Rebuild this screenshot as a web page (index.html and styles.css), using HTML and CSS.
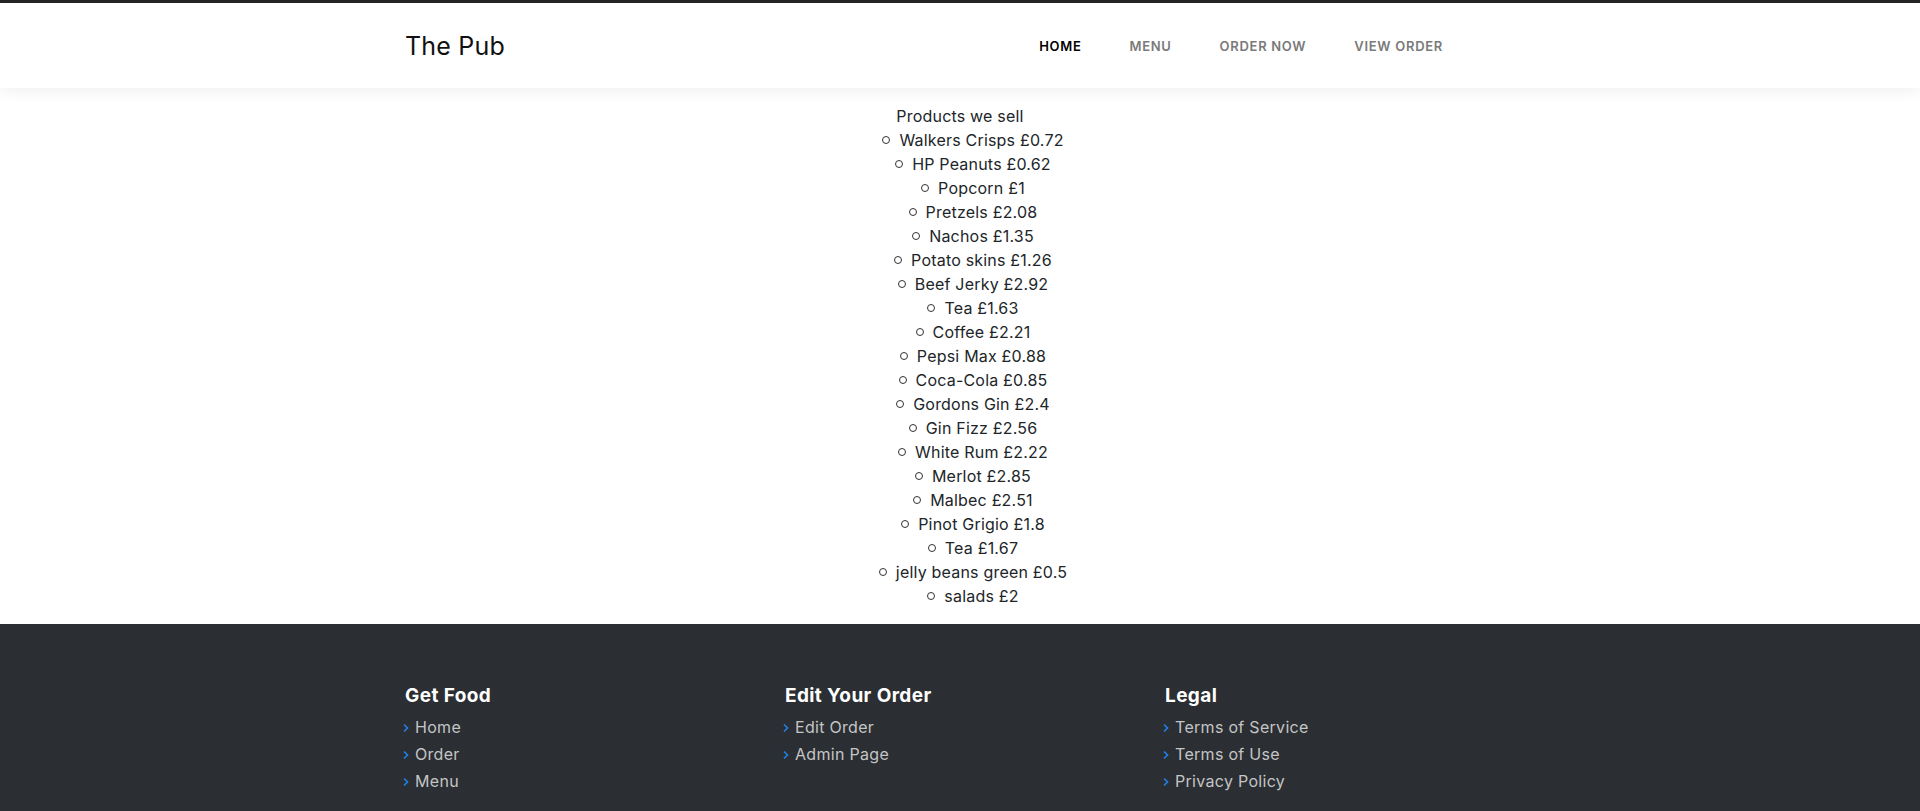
FILE: index.html
```html
<!DOCTYPE html>
<html lang="en">
<head>
<meta charset="utf-8">
<title>The Pub</title>
<link rel="stylesheet" href="styles.css">
</head>
<body>
<div class="topbar"></div>
<header class="site-header">
  <div class="container header-inner">
    <a class="logo" href="#">The Pub</a>
    <nav class="main-nav">
      <ul class="nav-list">
        <li><a class="nav-link active" href="#">HOME</a></li>
        <li><a class="nav-link" href="#">MENU</a></li>
        <li><a class="nav-link" href="#">ORDER NOW</a></li>
        <li><a class="nav-link" href="#">VIEW ORDER</a></li>
      </ul>
    </nav>
  </div>
</header>

<main class="products">
  <div class="products-title">Products we sell</div>
  <ul class="product-list">
    <li>Walkers Crisps £0.72</li>
    <li>HP Peanuts £0.62</li>
    <li>Popcorn £1</li>
    <li>Pretzels £2.08</li>
    <li>Nachos £1.35</li>
    <li>Potato skins £1.26</li>
    <li>Beef Jerky £2.92</li>
    <li>Tea £1.63</li>
    <li>Coffee £2.21</li>
    <li>Pepsi Max £0.88</li>
    <li>Coca-Cola £0.85</li>
    <li>Gordons Gin £2.4</li>
    <li>Gin Fizz £2.56</li>
    <li>White Rum £2.22</li>
    <li>Merlot £2.85</li>
    <li>Malbec £2.51</li>
    <li>Pinot Grigio £1.8</li>
    <li>Tea £1.67</li>
    <li>jelly beans green £0.5</li>
    <li>salads £2</li>
  </ul>
</main>

<footer class="site-footer">
  <div class="container footer-grid">
    <div class="footer-col">
      <h4 class="footer-title">Get Food</h4>
      <ul class="footer-links">
        <li><svg class="chev" viewBox="0 0 6 10" width="6" height="10"><polyline points="1,1.5 4.5,5 1,8.5"/></svg><a href="#">Home</a></li>
        <li><svg class="chev" viewBox="0 0 6 10" width="6" height="10"><polyline points="1,1.5 4.5,5 1,8.5"/></svg><a href="#">Order</a></li>
        <li><svg class="chev" viewBox="0 0 6 10" width="6" height="10"><polyline points="1,1.5 4.5,5 1,8.5"/></svg><a href="#">Menu</a></li>
      </ul>
    </div>
    <div class="footer-col">
      <h4 class="footer-title">Edit Your Order</h4>
      <ul class="footer-links">
        <li><svg class="chev" viewBox="0 0 6 10" width="6" height="10"><polyline points="1,1.5 4.5,5 1,8.5"/></svg><a href="#">Edit Order</a></li>
        <li><svg class="chev" viewBox="0 0 6 10" width="6" height="10"><polyline points="1,1.5 4.5,5 1,8.5"/></svg><a href="#">Admin Page</a></li>
      </ul>
    </div>
    <div class="footer-col">
      <h4 class="footer-title">Legal</h4>
      <ul class="footer-links">
        <li><svg class="chev" viewBox="0 0 6 10" width="6" height="10"><polyline points="1,1.5 4.5,5 1,8.5"/></svg><a href="#">Terms of Service</a></li>
        <li><svg class="chev" viewBox="0 0 6 10" width="6" height="10"><polyline points="1,1.5 4.5,5 1,8.5"/></svg><a href="#">Terms of Use</a></li>
        <li><svg class="chev" viewBox="0 0 6 10" width="6" height="10"><polyline points="1,1.5 4.5,5 1,8.5"/></svg><a href="#">Privacy Policy</a></li>
      </ul>
    </div>
  </div>
</footer>
</body>
</html>
```

FILE: styles.css
```css
* { box-sizing: border-box; }

html, body {
  margin: 0;
  padding: 0;
}

body {
  font-family: "Inter", "Open Sans", sans-serif;
  font-size: 16px;
  line-height: 24px;
  letter-spacing: 0.2px;
  color: #212529;
  background: #fff;
}

a { text-decoration: none; color: inherit; }

.topbar {
  height: 3px;
  background: #262626;
}

.container {
  width: 1140px;
  margin: 0 auto;
  padding: 0 15px;
}

.site-header {
  position: relative;
  z-index: 2;
  background: #fff;
  box-shadow: 0 2px 15px rgba(0, 0, 0, 0.07);
}

.header-inner {
  height: 85px;
  display: flex;
  align-items: center;
  justify-content: space-between;
}

.logo {
  font-size: 25px;
  font-weight: 400;
  color: #111;
  letter-spacing: 0.2px;
}

.main-nav {
  margin-right: 48px;
}

.nav-list {
  display: flex;
  list-style: none;
  margin: 0;
  padding: 0;
}

.nav-link {
  display: block;
  padding: 0 24px;
  font-size: 13px;
  font-weight: 600;
  color: #7a7a7a;
  letter-spacing: 0.7px;
}

.nav-link.active {
  color: #000;
}

.products {
  padding: 16px 0 16px;
  text-align: center;
}

.product-list {
  list-style: none;
  margin: 0;
  padding: 0 0 0 26px;
}

.product-list li::before {
  content: "";
  display: inline-block;
  width: 6px;
  height: 6px;
  margin-right: 9px;
  border: 1px solid #333;
  border-radius: 50%;
  vertical-align: 2px;
}

.site-footer {
  background: #2b2e32;
  color: #c4c5c6;
  padding: 60px 0 40px;
}

.footer-grid {
  display: grid;
  grid-template-columns: repeat(3, 1fr);
  column-gap: 30px;
}

.footer-title {
  margin: 0 0 5px;
  font-size: 19px;
  font-weight: 700;
  line-height: 24px;
  letter-spacing: 0.4px;
  color: #fff;
}

.footer-links {
  list-style: none;
  margin: 0;
  padding: 0;
}

.footer-links li {
  display: flex;
  align-items: center;
  height: 27px;
  font-size: 16px;
  letter-spacing: 0.3px;
}

.chev {
  flex: none;
  margin: 3px 6px 0 -2px;
  fill: none;
  stroke: #1e7fe6;
  stroke-width: 1.7;
}
```
